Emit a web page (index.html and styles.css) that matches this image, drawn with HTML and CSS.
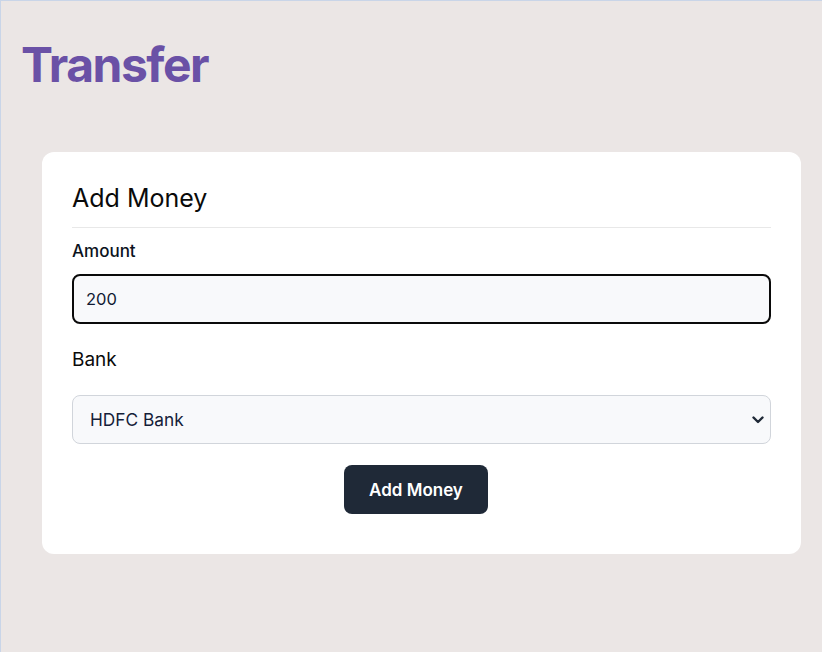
FILE: index.html
```html
<!DOCTYPE html>
<html>
<head>
<meta charset="utf-8">
<link rel="stylesheet" href="styles.css">
</head>
<body>
<div class="page">
  <h1 class="title">Transfer</h1>
  <div class="content">
    <div class="card">
      <h2 class="card-title">Add Money</h2>
      <label class="label-amount">Amount</label>
      <input class="amount" type="text" value="200">
      <div class="label-bank">Bank</div>
      <div class="select-wrap">
        <select class="bank">
          <option>HDFC Bank</option>
          <option>Axis Bank</option>
        </select>
        <svg class="chev" width="12" height="8" viewBox="0 0 12 8"><path d="M1.5 1.5 L6 6 L10.5 1.5" fill="none" stroke="#1f2937" stroke-width="2.4" stroke-linecap="round" stroke-linejoin="round"/></svg>
      </div>
      <div class="actions">
        <button class="btn">Add Money</button>
      </div>
    </div>
  </div>
</div>
</body>
</html>
```
FILE: styles.css
```css
* { box-sizing: border-box; }
html, body { margin: 0; padding: 0; }
body {
  background: #ebe6e5;
  font-family: Inter, "Noto Sans", sans-serif;
  width: 822px;
  height: 652px;
  overflow: hidden;
}
.page {
  height: 652px;
  border-top: 1px solid #c9d5e8;
  border-left: 1px solid #c9d5e8;
}
.title {
  margin: 0;
  padding: 40px 0 0 20px;
  font-size: 48px;
  line-height: 48px;
  font-weight: 700;
  letter-spacing: -1.5px;
  color: #6a51a6;
}
.content {
  padding: 63px 21px 0 41px;
}
.card {
  background: #fff;
  border-radius: 12px;
  padding: 30px 30px 40px 30px;
  display: flex;
  flex-direction: column;
}
.card-title {
  margin: 0;
  font-size: 25px;
  line-height: 33px;
  font-weight: 400;
  color: #0a0a0a;
  padding-bottom: 12px;
  border-bottom: 1px solid #e8e8e8;
}
.label-amount {
  margin-top: 11px;
  font-size: 17px;
  line-height: 24px;
  font-weight: 500;
  color: #0b1220;
}
.amount {
  margin-top: 11px;
  height: 50px;
  width: 100%;
  border: 2px solid #0a0a0a;
  border-radius: 8px;
  background: #f8f9fb;
  padding: 0 12px;
  font-family: Inter, sans-serif;
  font-size: 16.5px;
  color: #111a33;
  outline: none;
}
.label-bank {
  margin-top: 22px;
  font-size: 19px;
  line-height: 28px;
  color: #0a0a0a;
}
.select-wrap {
  position: relative;
  margin-top: 21px;
}
.bank {
  appearance: none;
  -webkit-appearance: none;
  width: 100%;
  height: 49px;
  border: 1px solid #d1d5db;
  border-radius: 8px;
  background: #f8f9fb;
  padding: 0 16px 0 17px;
  font-family: Inter, sans-serif;
  font-size: 17.3px;
  color: #142038;
  outline: none;
}
.chev {
  position: absolute;
  right: 7px;
  top: 21px;
}
.actions {
  display: flex;
  justify-content: center;
  margin-top: 21px;
  padding-right: 11px;
}
.btn {
  height: 49px;
  width: 144px;
  border: none;
  border-radius: 8px;
  background: #1f2937;
  color: #fff;
  font-family: Inter, sans-serif;
  font-size: 17px;
  font-weight: 600;
}
```
